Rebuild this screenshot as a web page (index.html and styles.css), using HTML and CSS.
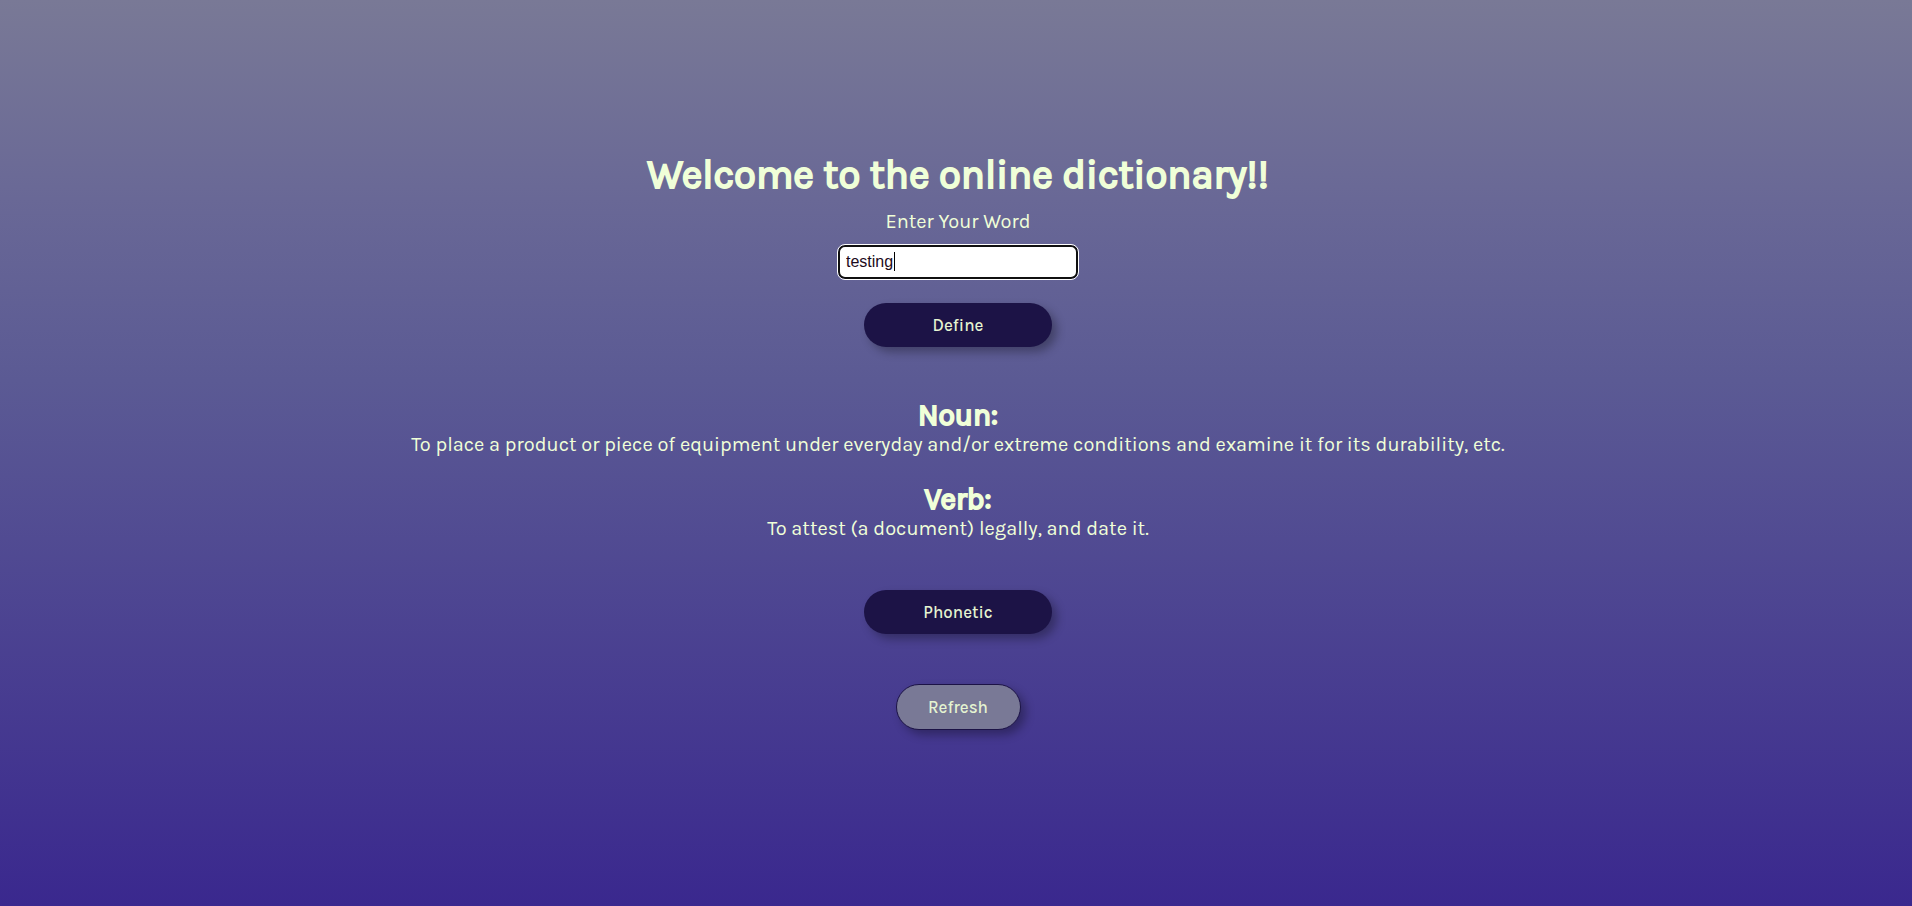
FILE: index.html
```html
<!DOCTYPE html>
<html lang="en">
<head>
<meta charset="utf-8">
<meta name="viewport" content="width=device-width, initial-scale=1">
<title>Online dictionary</title>
<link rel="stylesheet" href="styles.css">
</head>
<body>
<main class="dictionary">
  <h1 class="title">Welcome to the online dictionary!!</h1>
  <form class="search">
    <label class="search-label" for="word">Enter Your Word</label>
    <div class="field">
      <input class="field-input" id="word" type="text" value="testing" autocomplete="off" spellcheck="false">
      <span class="field-caret"></span>
    </div>
    <button class="button" type="button">Define</button>
  </form>
  <section class="definitions">
    <div class="entry">
      <h2 class="entry-heading">Noun:</h2>
      <p class="entry-text">To place a product or piece of equipment under everyday and/or extreme conditions and examine it for its durability, etc.</p>
    </div>
    <div class="entry">
      <h2 class="entry-heading">Verb:</h2>
      <p class="entry-text">To attest (a document) legally, and date it.</p>
    </div>
  </section>
  <button class="button" type="button">Phonetic</button>
  <button class="button button-refresh" type="button">Refresh</button>
</main>
</body>
</html>
```
FILE: styles.css
```css
* {
  box-sizing: border-box;
}

body {
  margin: 0;
  min-height: 100vh;
  background: linear-gradient(#797996, #696896 22%, #5b5a94 42%, #3a288e);
  color: #f0ffd8;
  font-family: Karla, Inter, sans-serif;
}

.dictionary {
  display: flex;
  flex-direction: column;
  align-items: center;
  padding: 151px 16px 48px 20px;
  text-align: center;
}

.title {
  margin: 0;
  font-size: 40px;
  line-height: 48px;
  font-weight: 400;
  -webkit-text-stroke: 2px;
}

.search {
  display: flex;
  flex-direction: column;
  align-items: center;
}

.search-label {
  margin: 11px 0;
  font-size: 20px;
  line-height: 24px;
}

.field {
  position: relative;
}

.field-input {
  display: block;
  width: 240px;
  height: 34px;
  padding: 0 6px;
  border: 2px solid #101010;
  border-radius: 7px;
  outline: 1px solid #fff;
  background: #fff;
  color: #1c0a20;
  font: 16px "Liberation Sans", Arial, sans-serif;
}

.field-caret {
  position: absolute;
  top: 7px;
  left: 56px;
  width: 1px;
  height: 19px;
  background: #000;
}

.button {
  width: 188px;
  height: 44px;
  margin-top: 24px;
  border: 0;
  border-radius: 22px;
  background: #1c1346;
  box-shadow: 5px 5px 10px rgba(0, 0, 0, 0.3);
  color: #e5f4d1;
  font: 500 17px/20px Karla, Inter, sans-serif;
}

.definitions {
  display: flex;
  flex-direction: column;
  gap: 26px;
  margin: 52px 0 25px;
}

.entry-heading {
  margin: 0 0 2px;
  font-size: 30px;
  line-height: 32px;
  font-weight: 400;
  -webkit-text-stroke: 2px;
}

.entry-text {
  margin: 0;
  color: #f0ffd8;
  font-size: 20px;
  line-height: 24px;
  font-weight: 400;
}

.button-refresh {
  width: 125px;
  height: 46px;
  margin-top: 50px;
  border: 1px solid #1c1346;
  border-radius: 23px;
  background: #797996;
}
```
